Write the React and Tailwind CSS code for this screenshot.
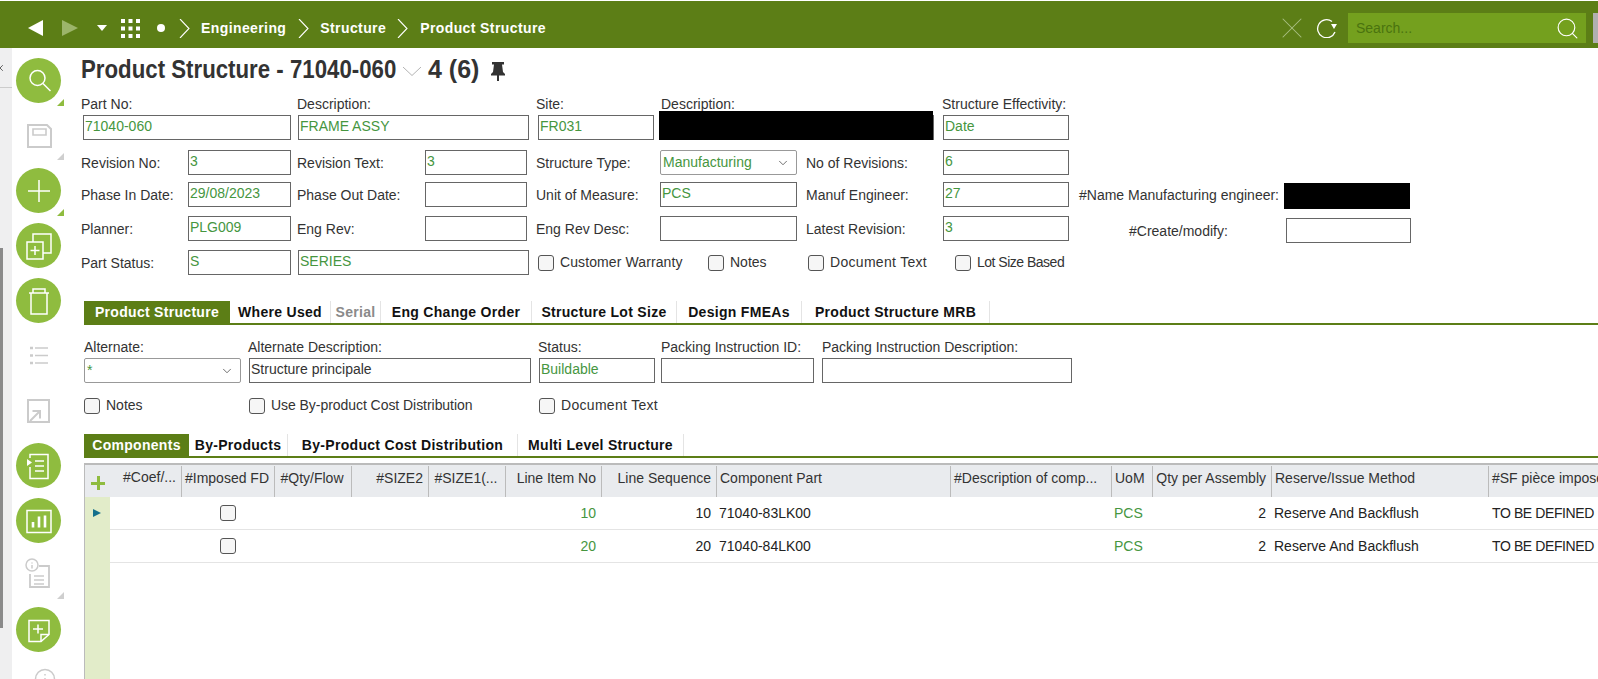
import React from 'react';
import { ChevronDown, Search, X } from 'lucide-react';

const FONT = "font-['Liberation_Sans',Arial,sans-serif]";
const GREEN = 'text-[#46963f]';

const Label = ({ children, className = '' }) => (
  <span className={`shrink-0 whitespace-nowrap text-[14px] leading-[16px] text-[#333] ${className}`}>{children}</span>
);

const Field = ({ value, className = '', dark }) => (
  <div className={`h-[25px] shrink-0 border border-[#666] bg-white pl-[1px] text-[14px] leading-[20px] ${dark ? 'text-[#333]' : GREEN} ${className}`}>
    {value}
  </div>
);

const Select = ({ value, className = '' }) => (
  <div className={`flex h-[25px] shrink-0 items-center justify-between rounded-[2px] border border-[#999] bg-white pl-[2px] pr-[6px] text-[14px] ${GREEN} ${className}`}>
    <span>{value}</span>
    <ChevronDown className="h-[14px] w-[14px] text-[#333]" strokeWidth={1.2} />
  </div>
);

const Check = ({ label, className = '' }) => (
  <div className={`flex shrink-0 items-center gap-[6px] ${className}`}>
    <div className="h-[16px] w-[16px] rounded-[3px] border border-[#555] bg-[#f6f6f6]" />
    {label && <span className="whitespace-nowrap text-[14px] text-[#333]">{label}</span>}
  </div>
);

const Corner = ({ className = '' }) => (
  <div className={`absolute left-[41px] h-0 w-0 border-b-[7px] border-l-[7px] border-l-transparent ${className}`} />
);

const Circle = ({ children, className = '', corner }) => (
  <div className={`relative flex h-[45px] w-[45px] shrink-0 items-center justify-center rounded-full bg-[#8fbc3f] ${className}`}>
    <svg width="28" height="28" viewBox="0 0 28 28" fill="none" stroke="#fff" strokeWidth="1.5">{children}</svg>
    {corner && <Corner className="top-[41px] border-b-[#8fbc3f]" />}
  </div>
);

const Ghost = ({ children, className = '', corner }) => (
  <div className={`relative flex h-[30px] w-[45px] shrink-0 items-center justify-center ${className}`}>
    <svg className="overflow-visible" width="30" height="30" viewBox="0 0 30 30" fill="none" stroke="#cbcbcb" strokeWidth="1.5">{children}</svg>
    {corner && <Corner className={`${corner} border-b-[#cfcfcf]`} />}
  </div>
);

const Sidebar = () => (
  <div className="flex w-[81px] shrink-0">
    <div className="relative w-[12px] shrink-0 bg-[#efeff0]">
      <X className="absolute -left-[5px] top-[15px] h-[10px] w-[10px] text-[#444]" strokeWidth={2} />
      <div className="absolute left-0 top-[39px] h-px w-full bg-[#ccc]" />
      <div className="absolute left-0 top-[200px] h-[380px] w-[3px] bg-[#8a8a8a]" />
    </div>
    <div className="ml-[4px] flex flex-col pt-[10px]">
      <Circle corner>
        <circle cx="12.500" cy="11" r="7.500" />
        <path d="M18 16.500l7.500 7.500" />
      </Circle>
      <Ghost className="mt-[19px]" corner="top-[31px]">
        <path d="M4 3h19l4 4v18H4z" strokeWidth="2" />
        <path d="M9 7h13v6H9z" strokeWidth="1.600" />
      </Ghost>
      <Circle className="mt-[16px]" corner>
        <path d="M14 3v22M3 14h22" />
      </Circle>
      <Circle className="mt-[10px]">
        <path d="M2 10h16v17H2z" />
        <path d="M8 10V2h18v19h-8" />
        <path d="M10 14v9M5.500 18.500h9" />
      </Circle>
      <Circle className="mt-[10px]">
        <path d="M6 6v21h16V6" />
        <path d="M4 6h20" />
        <path d="M8 6V2h12v4" />
      </Circle>
      <Ghost className="mt-[18px]">
        <path d="M11 7h13M11 14.500h13M11 22h13" />
        <path d="M6 7h3M6 14.500h3M6 22h3" strokeWidth="2.600" />
      </Ghost>
      <Ghost className="mt-[25px]">
        <path d="M4 4h21v22H4z" strokeWidth="2" />
        <path d="M6 25l10-10M8.500 15H16v7.500" strokeWidth="2" />
      </Ghost>
      <Circle className="mt-[17px]">
        <path d="M5 6V2.500h18v24H5V15" />
        <path d="M10 9h9M10 14h9M10 19h9" />
        <path d="M2 7l5 3.500L2 14z" fill="#fff" stroke="none" />
      </Circle>
      <Circle className="mt-[10px]">
        <path d="M2 3.500h24v22H2z" />
        <path d="M8 20.500V15M14 20.500V9.500M20 20.500v-12" strokeWidth="2.600" />
      </Circle>
      <Ghost className="mt-[16px]" corner="top-[33px]">
        <circle cx="8" cy="6" r="6" />
        <path d="M8 3.500v1M8 6v3.500" />
        <path d="M15 7h10v21H6V15" strokeWidth="1.800" />
        <path d="M10 17h10M10 21h10M10 25h10" />
      </Ghost>
      <Circle className="mt-[18px]">
        <path d="M16 25.500H4v-21h20v14z" />
        <path d="M16 25.500v-7h8" />
        <path d="M13 8.500v9M8 13h10" />
      </Circle>
      <svg className="ml-[17px] mt-[15px] shrink-0" width="24" height="24" viewBox="0 0 24 24" fill="none" stroke="#cbcbcb" strokeWidth="1.500">
        <circle cx="12" cy="12" r="9.500" />
        <path d="M12 7v1.500M12 11v6" />
      </svg>
    </div>
  </div>
);

const Crumb = ({ className = '' }) => (
  <svg className={className} width="11" height="19" viewBox="0 0 11 19" fill="none" stroke="#fff" strokeWidth="1.1"><path d="M1 0l9 9.500L1 19" /></svg>
);

const TopBar = () => (
  <div className="mt-px flex h-[47px] shrink-0 items-center bg-[#5c7e16] pl-[28px] pt-[7px] text-white">
    <svg width="15" height="16" viewBox="0 0 15 16" fill="#fff"><path d="M15 0v16L0 8z" /></svg>
    <svg className="ml-[19px]" width="16" height="16" viewBox="0 0 16 16" fill="#9cb56a"><path d="M0 0v16l16-8z" /></svg>
    <svg className="ml-[19px]" width="10" height="6" viewBox="0 0 10 6" fill="#fff"><path d="M0 0h10L5 6z" /></svg>
    <svg className="ml-[14px]" width="19" height="19" viewBox="0 0 19 19" fill="#fff">
      <path d="M0 0h4v4H0zM7.500 0h4v4h-4zM15 0h4v4h-4zM0 7.500h4v4H0zM7.500 7.500h4v4h-4zM15 7.500h4v4h-4zM0 15h4v4H0zM7.500 15h4v4h-4zM15 15h4v4h-4z" />
    </svg>
    <div className="ml-[17px] h-[8px] w-[8px] rounded-full bg-white" />
    <Crumb className="ml-[14px]" />
    <span className="ml-[11px] text-[14px] font-bold tracking-[0.4px]">Engineering</span>
    <Crumb className="ml-[12px]" />
    <span className="ml-[11px] text-[14px] font-bold tracking-[0.4px]">Structure</span>
    <Crumb className="ml-[11px]" />
    <span className="ml-[12px] text-[14px] font-bold tracking-[0.4px]">Product Structure</span>
    <X className="ml-auto h-[36px] w-[36px] text-[#a9bf83]" strokeWidth={0.7} />
    <svg className="ml-[6px]" width="22" height="20" viewBox="0 0 22 20" fill="none" stroke="#fff" strokeWidth="1.3">
      <path d="M16 3.500A9 9 0 1 0 19 14" />
      <path d="M15 6h6l-3 5z" fill="#fff" stroke="none" />
    </svg>
    <div className="ml-[10px] flex h-[30px] w-[238px] items-center justify-between bg-[#74a01e] pl-[8px] pr-[6px]">
      <span className="text-[14px] text-[#4a730f]">Search...</span>
      <Search className="h-[25px] w-[25px]" strokeWidth={1.1} />
    </div>
    <div className="ml-[7px] h-[30px] w-[5px] bg-[#b0b0b0]" />
  </div>
);

const Tabs = ({ items, className = '' }) => (
  <div className={`flex h-[24px] border-b-2 border-[#5c7e16] text-[14px] font-bold leading-[22px] tracking-[0.3px] ${className}`}>
    {items.map((t, i) => {
      let look = 'border-r border-[#e4e4e4] text-[#111]';
      if (i === 0) look = 'bg-[#5c7e16] text-white';
      if (t.muted) look = 'border-r border-[#e4e4e4] text-[#8a8a8a]';
      return (
        <div key={t.label} style={{ width: t.w }} className={`shrink-0 text-center ${look}`}>
          {t.label}
        </div>
      );
    })}
  </div>
);

const HeaderForm = () => (
  <div>
    <div className="flex h-[36px] items-end text-[#333]">
      <h1 className="w-[315px] origin-left scale-x-[0.89] whitespace-nowrap text-[25px] font-bold leading-[30px]">Product Structure - 71040-060</h1>
      <svg className="mb-[8px] ml-[7px]" width="18" height="9" viewBox="0 0 18 9" fill="none" stroke="#aaa" strokeWidth="0.9"><path d="M0 0l9 8.500L18 0" /></svg>
      <span className="ml-[7px] text-[25px] font-bold leading-[30px]">4 (6)</span>
      <svg className="mb-[3px] ml-[12px]" width="14" height="19" viewBox="0 0 14 19" fill="#333">
        <path d="M1 0h12v2.500h-2L12 10l2 2v1.500H8V19H6v-5.500H0V12l2-2 1-7.500H1z" />
      </svg>
    </div>

    <div className="mt-[12px] flex">
      <Label className="w-[216px]">Part No:</Label>
      <Label className="w-[239px]">Description:</Label>
      <Label className="w-[125px]">Site:</Label>
      <Label className="w-[281px]">Description:</Label>
      <Label>Structure Effectivity:</Label>
    </div>
    <div className="relative mt-[3px] flex">
      <Field value="71040-060" className="ml-[2px] w-[208px]" />
      <Field value="FRAME ASSY" className="ml-[7px] w-[231px]" />
      <Field value="FR031" className="ml-[9px] w-[116px]" />
      <Field value="" className="ml-[6px] w-[274px]" />
      <Field value="Date" className="ml-[9px] w-[126px]" />
      {/* redacted in the original */}
      <div className="absolute left-[578px] -top-[4px] h-[29px] w-[274px] bg-black" />
    </div>

    <div className="mt-[10px] flex items-center">
      <Label className="w-[107px]">Revision No:</Label>
      <Field value="3" className="w-[103px]" />
      <Label className="ml-[6px] w-[128px]">Revision Text:</Label>
      <Field value="3" className="w-[102px]" />
      <Label className="ml-[9px] w-[124px]">Structure Type:</Label>
      <Select value="Manufacturing" className="w-[137px]" />
      <Label className="ml-[9px] w-[137px]">No of Revisions:</Label>
      <Field value="6" className="w-[126px]" />
    </div>

    <div className="mt-[7px] flex items-center">
      <Label className="w-[107px]">Phase In Date:</Label>
      <Field value="29/08/2023" className="w-[103px]" />
      <Label className="ml-[6px] w-[128px]">Phase Out Date:</Label>
      <Field value="" className="w-[102px]" />
      <Label className="ml-[9px] w-[124px]">Unit of Measure:</Label>
      <Field value="PCS" className="w-[137px]" />
      <Label className="ml-[9px] w-[137px]">Manuf Engineer:</Label>
      <Field value="27" className="w-[126px]" />
      <Label className="ml-[10px] w-[205px]">#Name Manufacturing engineer:</Label>
      <div className="-mb-[2px] mt-[1px] h-[26px] w-[126px] bg-black" />
    </div>

    <div className="mt-[9px] flex items-center">
      <Label className="w-[107px]">Planner:</Label>
      <Field value="PLG009" className="w-[103px]" />
      <Label className="ml-[6px] w-[128px]">Eng Rev:</Label>
      <Field value="" className="w-[102px]" />
      <Label className="ml-[9px] w-[124px]">Eng Rev Desc:</Label>
      <Field value="" className="w-[137px]" />
      <Label className="ml-[9px] w-[137px]">Latest Revision:</Label>
      <Field value="3" className="w-[126px]" />
      <Label className="ml-[60px] mt-[4px] w-[157px]">#Create/modify:</Label>
      <Field value="" className="-mb-[2px] mt-[2px] w-[125px]" />
    </div>

    <div className="mt-[9px] flex items-center">
      <Label className="w-[107px]">Part Status:</Label>
      <Field value="S" className="w-[103px]" />
      <Field value="SERIES" className="ml-[7px] w-[231px]" />
      <Check label="Customer Warranty" className="ml-[9px] w-[170px] tracking-[0.1px]" />
      <Check label="Notes" className="w-[100px]" />
      <Check label="Document Text" className="w-[147px] tracking-[0.3px]" />
      <Check label="Lot Size Based" className="tracking-[-0.5px]" />
    </div>
  </div>
);

const SubForm = () => (
  <div className="ml-[3px]">
    <Tabs
      className="mt-[26px]"
      items={[
        { label: 'Product Structure', w: 146 },
        { label: 'Where Used', w: 101 },
        { label: 'Serial', w: 50, muted: true },
        { label: 'Eng Change Order', w: 151 },
        { label: 'Structure Lot Size', w: 145 },
        { label: 'Design FMEAs', w: 125 },
        { label: 'Product Structure MRB', w: 188 },
      ]}
    />

    <div className="mt-[14px] flex">
      <Label className="w-[164px]">Alternate:</Label>
      <Label className="w-[290px]">Alternate Description:</Label>
      <Label className="w-[123px]">Status:</Label>
      <Label className="w-[161px]">Packing Instruction ID:</Label>
      <Label>Packing Instruction Description:</Label>
    </div>
    <div className="mt-[3px] flex">
      <Select value="*" className="w-[157px]" />
      <Field value="Structure principale" dark className="ml-[8px] w-[282px]" />
      <Field value="Buildable" className="ml-[8px] w-[116px]" />
      <Field value="" className="ml-[6px] w-[153px]" />
      <Field value="" className="ml-[8px] w-[250px]" />
    </div>

    <div className="mt-[12px] flex">
      <Check label="Notes" className="w-[165px]" />
      <Check label="Use By-product Cost Distribution" className="w-[290px] tracking-[-0.05px]" />
      <Check label="Document Text" className="tracking-[0.3px]" />
    </div>

    <Tabs
      className="mt-[18px]"
      items={[
        { label: 'Components', w: 105 },
        { label: 'By-Products', w: 99 },
        { label: 'By-Product Cost Distribution', w: 230 },
        { label: 'Multi Level Structure', w: 166 },
      ]}
    />
  </div>
);

const Head = ({ children, align = '' }) => (
  <div className={`flex h-[31px] items-center overflow-hidden whitespace-nowrap border-l border-[#bbb] pb-[6px] pl-[3px] pr-[5px] ${align}`}>
    {children}
  </div>
);

const Row = ({ line, seq, part }) => (
  <div className="grid h-[33px] grid-cols-[71px_93px_77px_77px_77px_96px_115px_234px_161px_41px_119px_217px_111px] items-center border-b border-[#e4e4e4]">
    <div />
    <div className="flex justify-center"><div className="h-[16px] w-[16px] rounded-[3px] border border-[#555] bg-[#f6f6f6]" /></div>
    <div />
    <div />
    <div />
    <div className={`pr-[5px] text-right ${GREEN}`}>{line}</div>
    <div className="pr-[5px] text-right">{seq}</div>
    <div className="pl-[3px]">{part}</div>
    <div />
    <div className={`pl-[3px] ${GREEN}`}>PCS</div>
    <div className="pr-[5px] text-right">2</div>
    <div className="pl-[3px]">Reserve And Backflush</div>
    <div className="whitespace-nowrap pl-[4px] tracking-[-0.4px]">TO BE DEFINED</div>
  </div>
);

const Grid = () => (
  <div className="ml-[3px] mt-[5px] flex min-h-0 flex-1 flex-col overflow-hidden border-l border-t-2 border-[#bbb] text-[14px] text-[#222]">
    <div className="grid h-[32px] shrink-0 grid-cols-[96px_93px_77px_77px_77px_96px_115px_234px_161px_41px_119px_217px_111px] items-center bg-[#e9ebee] text-[#333]">
      <div className="relative h-full">
        <span className="absolute left-[6px] top-[11px] h-[14px] w-[14px]">
          <span className="absolute left-[6px] top-0 h-full w-[3px] bg-[#8fbc3f]" />
          <span className="absolute left-0 top-[6px] h-[3px] w-full bg-[#8fbc3f]" />
        </span>
        <span className="absolute right-[5px] top-[2px]">#Coef/...</span>
      </div>
      <Head align="justify-center">#Imposed FD</Head>
      <Head align="justify-center">#Qty/Flow</Head>
      <Head align="justify-end">#SIZE2</Head>
      <Head align="justify-center">#SIZE1(...</Head>
      <Head align="justify-end">Line Item No</Head>
      <Head align="justify-end">Line Sequence</Head>
      <Head>Component Part</Head>
      <Head>#Description of comp...</Head>
      <Head>UoM</Head>
      <Head align="justify-end">Qty per Assembly</Head>
      <Head>Reserve/Issue Method</Head>
      <Head>#SF pièce imposé</Head>
    </div>
    <div className="flex flex-1">
      <div className="relative w-[25px] shrink-0 bg-[#e2ecc9]">
        <div className="absolute left-[8px] top-[12px] h-0 w-0 border-y-[4px] border-l-[8px] border-y-transparent border-l-[#14708c]" />
      </div>
      <div className="min-w-0 flex-1">
        <Row line="10" seq="10" part="71040-83LK00" />
        <Row line="20" seq="20" part="71040-84LK00" />
      </div>
    </div>
  </div>
);

export default function App() {
  return (
    <div className={`flex h-[679px] w-[1598px] flex-col overflow-hidden bg-white ${FONT}`}>
      <TopBar />
      <div className="flex min-h-0 flex-1">
        <Sidebar />
        <main className="flex min-w-0 flex-1 flex-col">
          <HeaderForm />
          <SubForm />
          <Grid />
        </main>
      </div>
    </div>
  );
}
